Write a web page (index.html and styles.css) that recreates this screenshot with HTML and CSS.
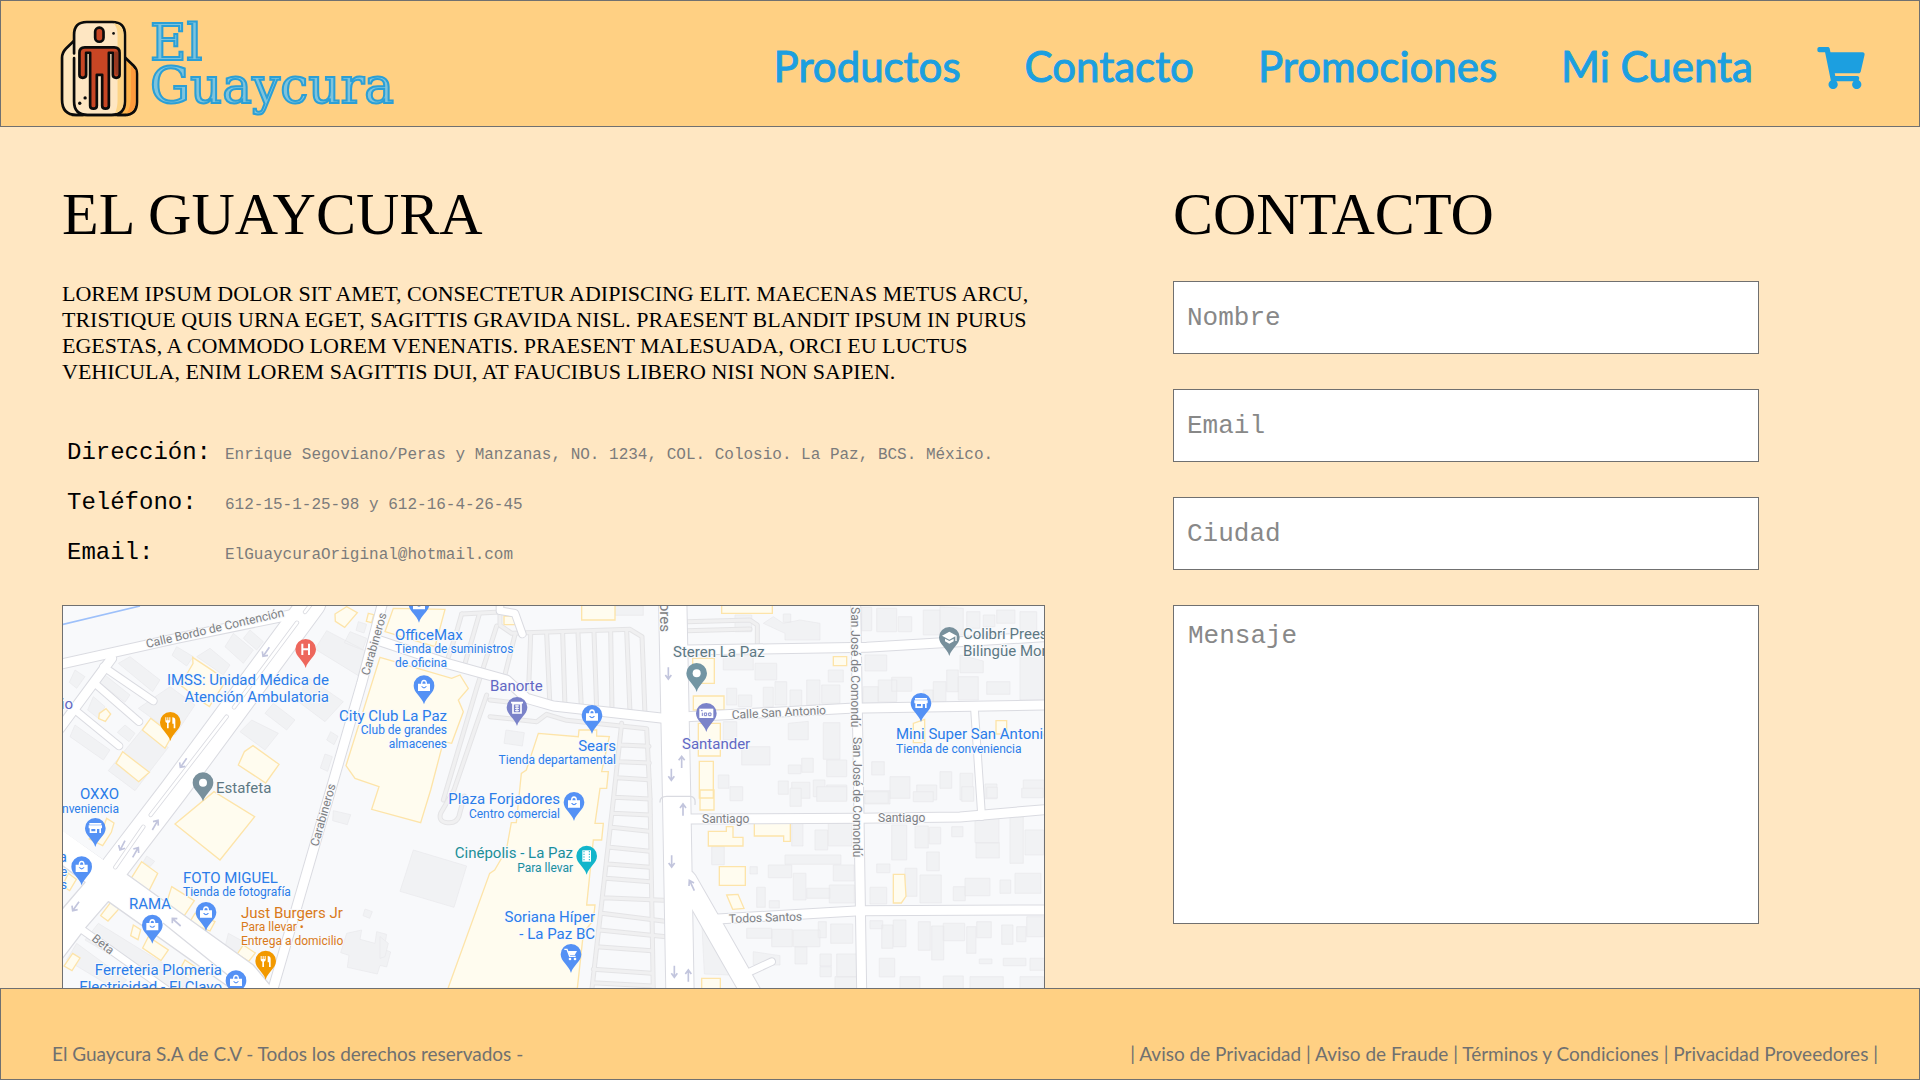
FILE: index.html
```html
<!DOCTYPE html>
<html lang="es">
<head>
<meta charset="utf-8">
<meta name="viewport" content="width=device-width, initial-scale=1">
<title>El Guaycura - Contacto</title>
<link rel="stylesheet" href="styles.css">
</head>
<body>
<header class="header">
  <a class="brand" href="#">
    <svg class="brand-icon" viewBox="180 60 236 290" aria-hidden="true">
      <g stroke="#0b0b0b" stroke-width="8" stroke-linejoin="round" stroke-linecap="round">
        <path fill="#fee6bd" d="M222 122l-24 23q-12 12-12 28v125q0 46 42 46h20V122z"/>
        <path fill="#fdb44b" d="M372 170l28 27q10 10 10 24v84q0 39-38 39h-20V170z"/>
        <path fill="#fe9a3c" stroke="none" d="M392 197l14 13v95q0 28-26 34 12-20 12-50z"/>
        <path fill="#fee6c2" d="M222 160V104q0-38 38-38h76q38 0 38 38v200q0 40-40 40h-72q-40 0-40-40V174"/>
        <path fill="#fdd486" stroke="none" d="M340 70q30 4 30 34v200q0 30-26 35 8-16 8-40V104q0-22-12-34z"/>
        <rect x="285" y="83" width="25" height="42" rx="12" fill="#c84624"/>
        <path fill="#c84624" d="M254 142h88q16 0 16 16v66q0 9-10 9t-10-9v-66h-12v158q0 9-10 9t-10-9v-92h-16v92q0 9-10 9t-10-9V158h-12v66q0 9-10 9t-10-9v-66q0-16 16-16z"/>
        <path fill="#963820" stroke="none" d="M342 154h12v70h-8z"/>
      </g>
      <path d="M215 344h163" stroke="#0b0b0b" stroke-width="7"/>
      <g fill="#0b0b0b"><circle cx="340" cy="100" r="4"/><circle cx="255" cy="293" r="5"/><circle cx="239" cy="309" r="5"/></g>
    </svg>
    <span class="brand-name">El<br>Guaycura</span>
  </a>
  <nav class="nav">
    <a href="#">Productos</a>
    <a href="#">Contacto</a>
    <a href="#">Promociones</a>
    <a href="#">Mi Cuenta</a>
    <a class="cart" href="#" aria-label="Carrito"><svg viewBox="0 0 576 512"><path d="M528.12 301.319l47.273-208C578.806 78.301 567.391 64 551.99 64H159.208l-9.166-44.81C147.758 8.021 137.93 0 126.529 0H24C10.745 0 0 10.745 0 24v16c0 13.255 10.745 24 24 24h69.883l70.248 343.435C147.325 417.1 136 435.222 136 456c0 30.928 25.072 56 56 56s56-25.072 56-56c0-15.674-6.447-29.835-16.824-40h209.647C430.447 426.165 424 440.326 424 456c0 30.928 25.072 56 56 56s56-25.072 56-56c0-22.172-12.888-41.332-31.579-50.405l5.517-24.276c3.413-15.018-8.002-29.319-23.403-29.319H218.117l-6.545-32h293.145c11.206 0 20.92-7.754 23.403-18.681z"/></svg></a>
  </nav>
</header>

<main class="main">
  <section class="about">
    <h1 class="title">EL GUAYCURA</h1>
    <p class="intro">LOREM IPSUM DOLOR SIT AMET, CONSECTETUR ADIPISCING ELIT. MAECENAS METUS ARCU,<br>TRISTIQUE QUIS URNA EGET, SAGITTIS GRAVIDA NISL. PRAESENT BLANDIT IPSUM IN PURUS<br>EGESTAS, A COMMODO LOREM VENENATIS. PRAESENT MALESUADA, ORCI EU LUCTUS<br>VEHICULA, ENIM LOREM SAGITTIS DUI, AT FAUCIBUS LIBERO NISI NON SAPIEN.</p>
    <dl class="details">
      <dt>Dirección:</dt><dd>Enrique Segoviano/Peras y Manzanas, NO. 1234, COL. Colosio. La Paz, BCS. México.</dd>
      <dt>Teléfono:</dt><dd>612-15-1-25-98 y 612-16-4-26-45</dd>
      <dt>Email:</dt><dd>ElGuaycuraOriginal@hotmail.com</dd>
    </dl>
    <div class="map">
      <svg class="map-art" viewBox="0 0 981 382" preserveAspectRatio="xMinYMin slice" role="img" aria-label="Mapa">
        <defs>
          <path id="pin" d="M0-31a31 31 0 0 1 31 31c0 22-24 32-31 56c-7-24-31-34-31-56a31 31 0 0 1 31-31z"/>
          <g id="bag"><use href="#pin" fill="#5491f5"/><path fill="#fff" fill-rule="evenodd" d="M-18-6h9q0-12 9-12t9 12h9v22h-36zM-5-6h10q0-7-5-7t-5 7zM-9 2q9 13 18 0h-4q-5 6-10 0z"/></g>
          <g id="shop"><use href="#pin" fill="#5491f5"/><path fill="#fff" fill-rule="evenodd" d="M-18-16h36v5h-36zM-20-9h40v9h-3v14h-5V2H5v12h-22V0h-3zM-12 2v7h12V2z"/></g>
          <g id="fork"><use href="#pin" fill="#f29900"/><path fill="#fff" d="M-15-15h3v9h3v-9h3v9h3v-9h3v12q0 4-5 5v16h-5V2q-5-1-5-5zM6-15q9 0 9 9v24h-5V4H6z"/></g>
          <g id="roads-xl"><path d="M755 10L342 570 165 802"/><path d="M1838 0l12 600 10 580"/></g>
          <g id="roads-l"><path d="M1880 840l80 140 80 140 40 70"/></g>
          <g id="roads-m">
            <path d="M0 193L350 115 705 42"/><path d="M155 175L0 385"/>
            <path d="M970 0L905 250 815 560 638 1170"/>
            <path d="M945 118l215 72 180 50 60 55 80 23 330 37"/>
            <path d="M1850 352l520-27 583-10"/><path d="M1880 150l540-8 533-32"/>
            <path d="M2387 0l18 1170"/><path d="M1880 657l520-2 300-4 253-22"/><path d="M1960 958l440-26 553-2"/>
          </g>
          <g id="roads-s"><path d="M130 200l150 103"/><path d="M110 255l127 110"/><path d="M45 330l132 108"/><path d="M60 985l275 195"/><path d="M2743 320l22 330"/><path d="M1320 0v32l45 8 22 62"/><path d="M2060 1120l75-35"/></g>
          <g id="aisles"><path d="M1205 42l115-6v40l35 24 355-12 36 22 9 235"/><path d="M1205 42l-20 70-20 60M1258 42l-42 145M1365 104l-35 140M1412 104l-6 160M1460 102l10 220M1508 102l7 220M1554 100l10 225M1602 98l8 230M1652 96l4 236M1700 92l10 246"/><path d="M1310 78L1250 265 1150 600M1280 285L1182 570 1142 640q-8 25 20 28t35-20l16-60M1290 300l90 10M1290 350l140 15 30-22 60 18 240 25 10 205 10 590"/><path d="M1685 370l-25 230-64 565M1685 435l82 4M1680 485l88 4M1672 533l95 6M1664 592l106 5M1658 640l112 5M1655 682l112 12M1650 742l120 12M1645 792l125 10M1638 835l132 10M1630 893l180 8M1625 940l190 24M1618 990l200 20M1610 1040l165 12M1600 1108l175 12M1598 1148l180 10"/><path d="M1880 65l190-5 22 15v65M1880 92l190-5"/></g>
        </defs>
        <rect width="981" height="382" fill="#f8f9fb"/>
        <g transform="scale(.333333) translate(-9 -18)">
          <path d="M0 75L240 18" stroke="#9dc0fa" stroke-width="5"/>
          <g fill="#f1f2f4" stroke="#e8e9ec" stroke-width="2">
            <path d="M350 140l50 30-20 28-44-32zM450 145l60 50-20 30-80-55zM520 100l60 50-30 40-55-50zM570 90l40 35-20 25-40-35zM800 92l115 60-20 75-130-80zM870 95l50 20-12 35-55-22zM895 65l25 8-8 26-24-8zM740 230l110 75-55 60-80-60zM640 310l65 50-25 30-65-50zM575 360l80 40-40 50-75-55zM812 395l22 14-12 25-22-14zM795 462l22 8-14 44-22-10z"/>
            <path d="M175 190l35-20 90 70-22 35zM45 210l30 20-25 35-22-18zM135 225l75 60-15 22-75-58zM100 290l35 30-20 35-32-25zM195 375l30 25-18 25-35-28zM45 375l105 75-20 30-100-70zM330 260l75 55-60 90-110-80 0 0zM245 390l80 52-100 130-80-60z"/>
            <path d="M820 632l52 12-10 30-44-12zM915 927l22 8-8 20-20-8zM860 1000l45-10-5 28 45 12 5-35 30 8-8 45 20 8-12 45-20-5-8 26-90-20 5-36-25-8z"/>
            <path d="M260 768l24 16-14 16-20-14zM505 1000l48 26-20 46-40-22zM115 970l275 170-40 40-275-160zM50 1030l150 110-30 30-150-90z"/>
            <path d="M1060 750l160 48-38 124-162-48zM1338 390l55 8-6 40-55-8zM1665 18h85v28h-85zM960 1010l25 20-10 40-15 5z"/>
            <path d="M2025 45h50v50h-50zM2110 70l30-20 30 20 50-10 60 10v50h-105v-20zM2170 42h22v25h-22zM2405 22h30v70h-30zM2450 25h60v70h-60zM2515 50h40v45h-40zM2590 30h50v75h-50zM2640 20l70 5v80h-70zM2720 35h40v50h-40zM2810 30h55v40h-55zM2880 35h50v60h-50zM2770 45h35v35h-35z"/>
            <path d="M1990 165h90v45h-90zM2000 265h30v50h-30zM2035 285h40v35h-40zM2085 190h65v50h-65zM2110 262h30v58h-30zM2145 245h35v70h-35zM2190 270h35v50h-35zM2240 240h40v75h-40zM2285 255h55v55h-55zM2305 210h45v36h-45zM2415 165h65v48h-65zM2410 260h45v50h-45zM2455 240h55v65h-55zM2495 232h60v42h-60zM2590 270h30v36h-30zM2620 245h38v60h-38zM2660 210h35v65h-35zM2695 230h60v70h-60zM2700 165l70 18v35h-70zM2780 245h70v38h-70zM2880 160h70v140h-70z"/>
            <path d="M1990 365h40v55h-40zM2045 440h85v55h-85zM2185 370l60-6v55h-60zM2290 368h50v110h-50zM2300 480h60v50h-60zM2225 475h35v42h-35zM2185 495h38v26h-38zM1975 525h32v40h-32zM2155 543h30v40h-30zM2195 547h55v48h-55zM2260 540h35v50h-35zM2300 555h60v45h-60zM2435 485l38 0v40h-38zM2415 572h75v40h-75zM2490 530h60v65h-60zM2570 555h60v45h-60zM2640 515h35v50h-35zM2700 520h38v80h-38zM2775 552h36v44h-36zM2890 540h62v50h-62zM2745 480h18v40h-18z"/>
            <path d="M2010 560h38v42h-38zM2190 565h34v54h-34zM2270 560h90v44h-90zM2415 575h70v35h-70zM2560 575h60v30h-60zM2705 560h36v44h-36zM2780 562h32v32h-32zM2885 565h65v28h-65z"/>
            <path d="M1955 740h38v54h-38zM2195 668h34v70h-34zM2265 690h38v60h-38zM2305 670h70v68h-70zM2175 765h168v28h-168zM2125 795h70v38h-70zM2200 820h38v80h-38zM2320 795h62v48h-62zM2240 865h70v30h-70zM2308 855h75v54h-75zM2070 800h22v22h-22zM2090 862h26v60h-26zM2128 902h30v22h-30z"/>
            <path d="M2495 675h45v105h-45zM2565 678h40v66h-40zM2608 682h34v50h-34zM2675 680h34v30h-34zM2745 650h72v78h-72zM2748 728h70v46h-70zM2850 650h40v140h-40zM2895 690h56v75h-56zM2600 756h38v56h-38zM2450 792h40v26h-40zM2535 805h36v84h-36zM2580 825h64v84h-64zM2680 860h36v42h-36zM2715 835h75v52h-75zM2820 840h32v40h-32zM2865 820h78v60h-78zM2430 862h50v50h-50z"/>
            <path d="M2060 985h75v30h-75zM2135 988h62v52h-62zM2200 990h80v50h-80zM2275 965h24v48h-24zM2312 972h66v58h-66zM2205 1040h36v52h-36zM2280 1062h34v36h-34zM2330 1062h60v68h-60zM2080 1055l80 12v28h-80zM2325 1130h70v40h-70zM2280 1100h34v30h-34zM2430 962h38v24h-38zM2465 975h34v70h-34zM2500 960h38v80h-38zM2575 965h36v86h-36zM2615 978h36v102h-36zM2650 970h64v52h-64zM2720 980h28v80h-28zM2750 965h44v48h-44zM2825 975h34v58h-34zM2870 980h28v45h-28zM2900 950h52v60h-52zM2758 1077h38v14h-38zM2830 1075h68v22h-68zM2910 1075h44v36h-44zM2458 1075h46v56h-46zM2520 1130h60v40h-60zM2650 1128h60v40h-60zM2730 1130h100v40h-100zM2880 1130h70v40h-70zM1925 955l83 170-75-3z"/>
          </g>
          <g fill="#fffcef" stroke="#fde4a9" stroke-width="4">
            <path d="M825 42l35-22 32 18-38 44-28-18zM925 40l16 4-6 24-16-4zM398 172l60 40 40 30-50 78-22-15-65-50 38-64zM118 340l20-14 14 16-16 22-20-8zM272 355l65 50-22 40-68-55zM188 455l80 62-32 28-68-55zM553 455l26-18 78 56-40 56-82-54z"/>
            <path d="M462 575l122 75-104 130-135-108zM140 655l22 14-8 28-26 40-40-20 40-30zM245 785l48 35-28 56-52-40zM335 860l68 42-35 52-50-40zM405 940l60 25-15 28-62-25zM152 907l26 18-34 38-22-16zM220 975l22 14-8 30-22-12zM265 1010l60 40-22 32-55-38zM375 1080l30 20-14 28-30-22zM550 1035l36 24-20 25-34-22zM38 1060l22 14-24 38-24-14zM25 820l24 18-20 34-22-14z"/>
            <path d="M960 172l215 63 25-10 25 40-30 35 15 35-35 95-25-5-38 145-30 98-147-40 22-68-72-25-27-38zM1000 25l155 3-30 112-150-45zM1332 48h42v26h-42zM1565 10h100v50h-100z"/>
            <path d="M1435 400l120 10 2-20h53v18l38 2-23 105h20l-5 50h-20l-15 105h25l-5 50h-25l-20 195h25l-5 45-30 40-18 165h-388l125-345 15-10 35-60 15-82h15l10-98 5-50 15-10z"/>
            <path d="M1985 10h152v30h-152zM1898 175h65v75h-65zM1900 288h92v42h-92zM1915 370h66v98h-66zM1918 484h42v110h-42zM1920 570h42v60h-42zM2320 170h40v27h-40zM2560 370l34-12v70h-34zM2808 362h32v40h-32z"/>
            <path d="M1945 694h54v-14h20v32h30v26h-104zM2083 668h108v56h-20v-16h-88zM1978 800h78v56h-78zM2000 885l34-2 18 42-34 3zM2500 823h34l4 66-14 20h-24zM1925 1135h56v34h-56z"/>
          </g>
          <g fill="none" stroke-linejoin="round" stroke-linecap="round">
            <use href="#aisles" stroke="#e4e4e6" stroke-width="15"/><use href="#aisles" stroke="#f0f0f1" stroke-width="9"/>
            <g stroke="#dadbe1"><use href="#roads-xl" stroke-width="88"/><use href="#roads-l" stroke-width="64"/><use href="#roads-m" stroke-width="33"/><use href="#roads-s" stroke-width="26"/></g>
            <path d="M0 690l135 95 65 37 380 273 75 90H540L145 905l-65 75-80 105V935l75-88-75-55z" fill="#fff" stroke="#dadbe1" stroke-width="4"/>
            <g stroke="#fff"><use href="#roads-xl" stroke-width="82"/><use href="#roads-l" stroke-width="58"/><use href="#roads-m" stroke-width="27"/><use href="#roads-s" stroke-width="20"/></g>
            <path d="M0 705l165 118 60 42" stroke="#fff" stroke-width="30"/>
            <g stroke="#dadbe1" stroke-width="13"><path d="M755 10l-20 26M711 68L522 322M500 350L272 645M250 680l-84 122"/></g>
            <g stroke="#fff" stroke-width="8"><path d="M755 10l-20 26M711 68L522 322M500 350L272 645M250 680l-84 122"/></g>
            <path d="M310 970l230 185M1800 606q0-17 20-17h70q18 0 15 24" stroke="#dadbe1" stroke-width="4"/>
          </g>
          <g stroke="#c2c5dd" stroke-width="5" fill="none">
            <path d="M628 142l-18 26m-3-14l2 15 15-3M380 475l-18 26m-3-14l2 15 15-3M195 722l-14 27m-5-14l4 15 15-5M277 690l16-28m-14 3l15-4 1 16M218 772l16-28m-14 3l15-4 1 16M57 905l-18 26m-3-14l2 15 15-3M362 978l-25-22m0 14l0-15 15 1"/>
            <path d="M1825 202v34m-9-11l9 12 9-12M1834 506v34m-9-11l9 12 9-12M1865 504v-34m-9 11l9-12 9 12M1869 647v-34m-9 11l9-12 9 12M1835 766v34m-9-11l9 12 9-12M1843 1097v34m-9-11l9 12 9-12M1885 1145v-34m-9 11l9-12 9 12M1903 872l-14-30m-2 16l1-17 14 8"/>
          </g>
          <g>
            <g transform="translate(737 148)"><use href="#pin" fill="#ee675c"/><path d="M-10-17v34M10-17v34M-10 0h20" stroke="#fff" stroke-width="6"/></g>
            <use href="#fork" x="331" y="367"/><use href="#fork" x="617" y="1083"/>
            <g transform="translate(429 548)"><use href="#pin" fill="#78909c"/><circle r="12" fill="#fff"/></g>
            <g transform="translate(1910 220)"><use href="#pin" fill="#7295a3"/><circle r="12" fill="#fff"/></g>
            <use href="#shop" x="106" y="685"/><use href="#shop" x="2583" y="310"/>
            <use href="#bag" x="65" y="800"/><use href="#bag" x="277" y="975"/><use href="#bag" x="438" y="937"/><use href="#bag" x="528" y="1142"/><use href="#bag" x="1077" y="12"/><use href="#bag" x="1092" y="257"/><use href="#bag" x="1596" y="346"/><use href="#bag" x="1542" y="607"/>
            <g transform="translate(1371 322)"><use href="#pin" fill="#7b83c9"/><path d="M-18-14h36M-12-11h24v28h-24z" fill="none" stroke="#fff" stroke-width="5"/><path d="M-6-4H6M-6 3H6M-6 10H6M0-7v20" stroke="#fff" stroke-width="3"/></g>
            <g transform="translate(1939 340)"><use href="#pin" fill="#7b83c9"/><path d="M-21-14h42v28h-42z" fill="#fff"/><path d="M-16-8h5M-12-2v10M-6-1h7v8h-7zM7-1h7v8H7z" fill="none" stroke="#7b83c9" stroke-width="3"/></g>
            <g transform="translate(1580 768)"><use href="#pin" fill="#12b5cb"/><path d="M-13-17h26v34h-26z" fill="#fff"/><path d="M-8-15v30M8-15v30" stroke="#12b5cb" stroke-width="3" stroke-dasharray="4 4"/></g>
            <g transform="translate(1533 1063)"><use href="#pin" fill="#5491f5"/><path d="M-20-15h8l8 21h18" fill="none" stroke="#fff" stroke-width="4"/><path d="M-9-10h27l-7 13H-4z" fill="#fff"/><circle cx="-3" cy="14" r="4" fill="#fff"/><circle cx="12" cy="14" r="4" fill="#fff"/></g>
            <g transform="translate(2668 112)"><use href="#pin" fill="#78909c"/><path d="M0-17l22 12v16h-4V-3L0 7l-22-12zM-13 4L0 11 13 4v8L0 19l-13-7z" fill="#fff"/></g>
          </g>
        </g>
        <g class="place">
          <g class="end"><text x="266" y="79">IMSS: Unidad Médica de</text><text x="266" y="96">Atención Ambulatoria</text><text x="384" y="115">City Club La Paz</text><text x="56" y="193">OXXO</text><text x="159" y="369">Ferreteria Plomeria</text><text x="159" y="386">Electricidad - El Clavo</text><text x="553" y="145">Sears</text><text x="497" y="198">Plaza Forjadores</text><text x="532" y="316">Soriana Híper</text><text x="532" y="333">- La Paz BC</text><text x="4" y="256">a</text></g>
          <text x="120" y="277">FOTO MIGUEL</text><text x="66" y="303">RAMA</text><text x="332" y="34">OfficeMax</text><text x="833" y="133">Mini Super San Antonio</text>
          <text class="teal end" x="510" y="252">Cinépolis - La Paz</text><text class="orange" x="178" y="312">Just Burgers Jr</text>
          <g class="slate"><text x="153" y="187">Estafeta</text><text x="610" y="51">Steren La Paz</text><text x="900" y="33">Colibrí Preescolar</text><text x="900" y="50">Bilingüe Montessori</text></g>
          <g class="violet"><text x="427" y="85">Banorte</text><text x="619" y="143">Santander</text><text class="end" x="10" y="103">io</text></g>
          <text class="street end" transform="translate(597 26) rotate(90)">Forjadores</text>
        </g>
        <g class="place note">
          <g class="end"><text x="384" y="128">Club de grandes</text><text x="384" y="142">almacenes</text><text x="56" y="207">Tienda de conveniencia</text><text x="4" y="270">e</text><text x="4" y="283">s</text><text x="553" y="158">Tienda departamental</text><text x="497" y="212">Centro comercial</text><text class="teal" x="510" y="266">Para llevar</text></g>
          <text x="332" y="47">Tienda de suministros</text><text x="332" y="61">de oficina</text><text x="120" y="290">Tienda de fotografía</text><text x="833" y="147">Tienda de conveniencia</text>
          <text class="orange" x="178" y="325">Para llevar •</text><text class="orange" x="178" y="339">Entrega a domicilio</text>
        </g>
        <g class="place note street">
          <text transform="translate(84 42) rotate(-13)">Calle Bordo de Contención</text>
          <text transform="translate(306 70) rotate(-74)">Carabineros</text><text transform="translate(255 241) rotate(-74)">Carabineros</text>
          <text transform="translate(28 334) rotate(38)">Beta</text>
          <text transform="translate(788 1) rotate(90)">San José de Comondú</text><text transform="translate(790 131) rotate(90)">San José de Comondú</text>
          <text transform="translate(669 113) rotate(-3)">Calle San Antonio</text>
          <text x="639" y="217">Santiago</text><text x="815" y="216">Santiago</text>
          <text transform="translate(666 317) rotate(-2)">Todos Santos</text>
        </g>
      </svg>
    </div>
  </section>

  <section class="contact">
    <h2 class="title">CONTACTO</h2>
    <form class="form">
      <input class="field" type="text" placeholder="Nombre" aria-label="Nombre">
      <input class="field" type="email" placeholder="Email" aria-label="Email">
      <input class="field" type="text" placeholder="Ciudad" aria-label="Ciudad">
      <textarea class="field message" placeholder="Mensaje" aria-label="Mensaje"></textarea>
    </form>
  </section>
</main>

<footer class="footer">
  <span>El Guaycura S.A de C.V - Todos los derechos reservados -</span>
  <nav>| <a href="#">Aviso de Privacidad</a> | <a href="#">Aviso de Fraude</a> | <a href="#">Términos y Condiciones</a> | <a href="#">Privacidad Proveedores</a> |</nav>
</footer>
</body>
</html>
```
FILE: styles.css
```css
* { box-sizing: border-box; }

body {
  margin: 0;
  min-height: 100vh;
  display: flex;
  flex-direction: column;
  background: #ffe7c2;
  color: #000;
  font-family: Lato, sans-serif;
}

a { color: inherit; text-decoration: none; }

.header {
  display: flex;
  justify-content: space-between;
  align-items: center;
  height: 127px;
  padding: 0 54px 0 59px;
  background: #ffd083;
  border: 1px solid #707070;
}

.brand { display: flex; align-items: center; gap: 11px; padding-top: 9px; }
.brand-icon { width: 79px; height: 97px; }
.brand-name {
  font: 50px/43px "DejaVu Serif", serif;
  color: #7fc4dc;
  -webkit-text-stroke: 2px #2b9fd6;
  padding-bottom: 7px;
}

.nav {
  display: flex;
  align-items: center;
  gap: 64px;
  padding-top: 4px;
  color: #1c9fe0;
  font-size: 42px;
  line-height: 52px;
  -webkit-text-stroke: 1px #1c9fe0;
}
.cart svg { display: block; width: 48px; height: 42px; margin-top: 4px; fill: currentColor; }

.main {
  flex: 1;
  display: grid;
  grid-template-columns: 983fr 586fr;
  gap: 128px;
  padding: 51px 161px 0 62px;
}

.about { display: flex; flex-direction: column; min-width: 0; }

.title {
  margin: 0 0 31px;
  font: 400 60px/72px "Liberation Serif", serif;
}

.intro {
  margin: 0 0 44px;
  font: 22px/26px "Liberation Serif", serif;
}

.details {
  display: grid;
  grid-template-columns: 157px 1fr;
  grid-auto-rows: 50px;
  align-items: baseline;
  margin: 0 0 26px;
  padding-left: 5px;
  font-family: "Liberation Mono", monospace;
  line-height: 48px;
}
.details dt { font-size: 24px; }
.details dd { margin: 0; padding-left: 1px; font-size: 16px; color: #7b7b7b; }

.map {
  flex: 1;
  min-height: 383px;
  border: 1px solid #707070;
  border-bottom: 0;
  background: #f8f9fb;
  overflow: hidden;
}
.map-art { display: block; width: 100%; }

.place {
  font-family: Roboto, sans-serif;
  font-size: 15px;
  fill: #2b7de9;
  stroke: #f8f9fb;
  stroke-width: 2px;
  paint-order: stroke;
}
.note { font-size: 12px; }
.street { fill: #7d7f83; }
.end { text-anchor: end; }
.teal { fill: #1b8f98; }
.orange { fill: #d97a1a; }
.slate { fill: #5d7883; }
.violet { fill: #6168c4; }

.contact { padding-bottom: 64px; }
.form { display: grid; gap: 35px; }
.field {
  display: block;
  width: 100%;
  height: 73px;
  padding: 0 13px;
  border: 1px solid #707070;
  border-radius: 0;
  background: #fff;
  font: 26px/32px "Liberation Mono", monospace;
}
.field::placeholder { color: #888; opacity: 1; }
.message { height: 319px; padding: 14px; resize: none; }

.footer {
  display: flex;
  justify-content: space-between;
  align-items: flex-end;
  height: 92px;
  padding: 0 41px 13px 51px;
  background: #ffd083;
  border: 1px solid #707070;
  color: #707070;
  font-size: 19px;
  line-height: 24px;
}
```
